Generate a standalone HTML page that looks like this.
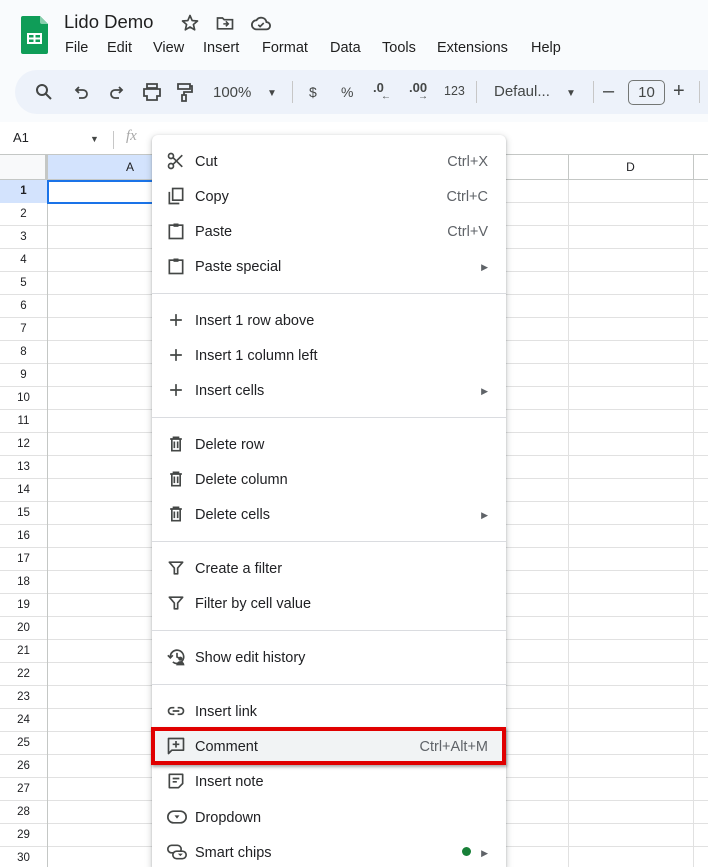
<!DOCTYPE html>
<html style="overflow:hidden;height:867px"><head><meta charset="utf-8"><style>
*{margin:0;padding:0;box-sizing:border-box}
body{width:708px;height:867px;overflow:hidden;position:relative;background:#fff;font-family:"Liberation Sans",Arial,sans-serif;color:#202124}
.a{position:absolute}
.top{left:0;top:0;width:708px;height:122px;background:#f9fbfd}
.title{left:64px;top:11px;font-size:18.5px;color:#1f1f1f}
.mb{top:40px;font-size:14.5px;color:#1f1f1f}
.tb{left:15px;top:70px;width:720px;height:44px;border-radius:22px;background:#edf2fa}
.ti{font-size:14px;color:#444746}
.sep{width:1px;height:22px;background:#c7c7c7;top:81px}
.grid{left:0;top:180px;width:708px;height:687px;
background-image:repeating-linear-gradient(to bottom,transparent 0,transparent 22px,#e1e1e1 22px,#e1e1e1 23px);}
.rn{left:0;width:47px;text-align:center;font-size:11.5px;color:#202124;height:23px;line-height:23px}
.menu{left:152px;top:135px;width:354px;height:732px;background:#fff;border-radius:6px 6px 0 0;box-shadow:0 2px 6px 2px rgba(60,64,67,.15),0 1px 2px rgba(60,64,67,.3)}
.it{position:absolute;left:0;width:354px;height:35px;line-height:39px;font-size:14.5px;color:#202124}
.it .t{position:absolute;left:43px}
.it .k{position:absolute;right:18px;color:#5f6368;font-size:14.5px}
.it .ar{position:absolute;right:18px;top:0;font-size:9px;color:#5f6368}
.it svg{position:absolute;left:14px;top:8px}
.ms{position:absolute;left:0;width:354px;height:1px;background:#dadce0}
</style></head><body>
<div class="a top"></div>
<svg class="a" style="left:21px;top:16px" width="27" height="38" viewBox="0 0 27 38"><path d="M2 0h17l8 8v28a2 2 0 0 1-2 2H2a2 2 0 0 1-2-2V2a2 2 0 0 1 2-2z" fill="#0f9d58"/><path d="M19 0l8 8h-6a2 2 0 0 1-2-2z" fill="#87ceac"/><rect x="6" y="17" width="15" height="11" fill="#fff"/><rect x="8" y="19" width="4.5" height="2.5" fill="#0f9d58"/><rect x="14.5" y="19" width="4.5" height="2.5" fill="#0f9d58"/><rect x="8" y="23.5" width="4.5" height="2.5" fill="#0f9d58"/><rect x="14.5" y="23.5" width="4.5" height="2.5" fill="#0f9d58"/></svg>
<div class="a title">Lido Demo</div>
<svg class="a" style="left:180px;top:13px" width="20" height="20" viewBox="0 0 24 24"><path d="M12 3l2.6 6.1 6.4.5-4.9 4.2 1.5 6.4L12 16.8 6.4 20.2l1.5-6.4L3 9.6l6.4-.5z" fill="none" stroke="#444746" stroke-width="2" stroke-linejoin="round"/></svg>
<svg class="a" style="left:215px;top:13px" width="20" height="20" viewBox="0 0 24 24"><path d="M3 6h6l2 2h10v11H3z" fill="none" stroke="#444746" stroke-width="2"/><path d="M10 13h6M13 10l3 3-3 3" fill="none" stroke="#444746" stroke-width="1.8"/></svg>
<svg class="a" style="left:250px;top:13px" width="22" height="20" viewBox="0 0 24 22"><path d="M7 18a5 5 0 0 1 0-10 6 6 0 0 1 11 2 4 4 0 0 1 0 8z" fill="none" stroke="#444746" stroke-width="2"/><path d="M9 13l2 2 4-4" fill="none" stroke="#444746" stroke-width="1.8"/></svg>
<div class="a mb" style="left:65px">File</div><div class="a mb" style="left:107px">Edit</div><div class="a mb" style="left:153px">View</div><div class="a mb" style="left:203px">Insert</div><div class="a mb" style="left:262px">Format</div><div class="a mb" style="left:330px">Data</div><div class="a mb" style="left:382px">Tools</div><div class="a mb" style="left:437px">Extensions</div><div class="a mb" style="left:531px">Help</div>
<div class="a tb"></div>
<svg class="a" style="left:35px;top:83px" width="18" height="18" viewBox="0 0 18 18"><circle cx="7" cy="7" r="5" fill="none" stroke="#444746" stroke-width="2"/><path d="M11 11l5 5" stroke="#444746" stroke-width="2"/></svg>
<svg class="a" style="left:74px;top:85px" width="16" height="16" viewBox="0 0 16 16"><path d="M5 2L2 5l3 3M2 5h7a4 4 0 0 1 0 8H5" fill="none" stroke="#444746" stroke-width="1.8"/></svg>
<svg class="a" style="left:108px;top:85px" width="16" height="16" viewBox="0 0 16 16"><path d="M11 2l3 3-3 3M14 5H7a4 4 0 0 0 0 8h4" fill="none" stroke="#444746" stroke-width="1.8"/></svg>
<svg class="a" style="left:142px;top:83px" width="20" height="18" viewBox="0 0 20 18"><path d="M5 1h10v4H5zM2 6h16v7h-3v4H5v-4H2z" fill="none" stroke="#444746" stroke-width="1.8"/></svg>
<svg class="a" style="left:176px;top:82px" width="18" height="20" viewBox="0 0 18 20"><path d="M2 2h12v5H2zM14 4h2v6H8v3M6 13h4v6H6z" fill="none" stroke="#444746" stroke-width="1.8"/></svg>
<div class="a ti" style="left:213px;top:84px;font-size:15px">100%</div>
<div class="a ti" style="left:267px;top:88px;font-size:10px">▼</div>
<div class="a sep" style="left:292px"></div>
<div class="a ti" style="left:309px;top:84px">$</div>
<div class="a ti" style="left:341px;top:84px">%</div>
<div class="a ti" style="left:373px;top:80px;font-weight:bold;font-size:13px">.0</div><div class="a ti" style="left:381px;top:91px;font-size:10px">←</div>
<div class="a ti" style="left:409px;top:80px;font-weight:bold;font-size:13px">.00</div><div class="a ti" style="left:418px;top:91px;font-size:10px">→</div>
<div class="a ti" style="left:444px;top:84px;font-size:12.5px">123</div>
<div class="a sep" style="left:476px"></div>
<div class="a ti" style="left:494px;top:83px;font-size:15px">Defaul...</div>
<div class="a ti" style="left:566px;top:88px;font-size:10px">▼</div>
<div class="a sep" style="left:593px"></div>
<div class="a ti" style="left:603px;top:80px;font-size:20px">–</div>
<div class="a" style="left:628px;top:80px;width:37px;height:25px;border:1px solid #747775;border-radius:5px;font-size:15px;text-align:center;line-height:23px;color:#444746">10</div>
<div class="a ti" style="left:673px;top:80px;font-size:20px">+</div>
<div class="a sep" style="left:699px"></div>
<div class="a" style="left:13px;top:130px;font-size:13px;color:#202124">A1</div>
<div class="a" style="left:90px;top:134px;font-size:9px;color:#444746">▼</div>
<div class="a" style="left:113px;top:131px;width:1px;height:18px;background:#c7c7c7"></div>
<div class="a" style="left:126px;top:128px;font-size:15px;color:#a8a8a8;font-style:italic;font-family:'Liberation Serif',serif">fx</div>
<div class="a" style="left:0;top:154px;width:708px;height:1px;background:#c4c7c5"></div>
<div class="a" style="left:0;top:155px;width:45px;height:25px;background:#f8f9fa"></div>
<div class="a" style="left:45px;top:155px;width:3px;height:25px;background:#c4c7c5"></div>
<div class="a" style="left:48px;top:155px;width:164px;height:25px;background:#d3e3fd;text-align:center;font-size:12px;line-height:25px">A</div>
<div class="a" style="left:568px;top:155px;width:125px;height:25px;text-align:center;font-size:12px;line-height:25px;color:#202124">D</div>
<div class="a" style="left:0;top:179px;width:708px;height:1px;background:#c4c7c5"></div>
<div class="a grid"></div>
<div class="a" style="left:47px;top:155px;width:1px;height:712px;background:#c4c7c5"></div>
<div class="a" style="left:212px;top:155px;width:1px;height:712px;background:#e1e1e1"></div>
<div class="a" style="left:568px;top:155px;width:1px;height:25px;background:#c4c7c5"></div>
<div class="a" style="left:568px;top:180px;width:1px;height:687px;background:#e1e1e1"></div>
<div class="a" style="left:693px;top:155px;width:1px;height:25px;background:#c4c7c5"></div>
<div class="a" style="left:693px;top:180px;width:1px;height:687px;background:#e1e1e1"></div>
<div class="a" style="left:0;top:180px;width:47px;height:23px;background:#d3e3fd"></div>
<div class="a" style="left:47px;top:180px;width:166px;height:24px;border:2px solid #1a73e8"></div>
<div id="rows"></div>
<script>
var h='';for(var i=1;i<=30;i++){h+='<div class="a rn" style="top:'+(180+(i-1)*23)+'px'+(i==1?';font-weight:bold':'')+'">'+i+'</div>';}
document.getElementById('rows').innerHTML=h;
</script>
<div class="a menu">
<div class="it" style="top:8px"><svg width="20" height="20" viewBox="0 0 24 24"><circle cx="6" cy="6" r="3" fill="none" stroke="#444746" stroke-width="2"/><circle cx="6" cy="18" r="3" fill="none" stroke="#444746" stroke-width="2"/><path d="M8.5 8l11 11M8.5 16l11-11" stroke="#444746" stroke-width="2"/></svg><span class="t">Cut</span><span class="k">Ctrl+X</span></div>
<div class="it" style="top:43px"><svg width="20" height="20" viewBox="0 0 24 24"><path d="M4 7v14h12" fill="none" stroke="#444746" stroke-width="2"/><rect x="8" y="3" width="12" height="14" fill="none" stroke="#444746" stroke-width="2"/></svg><span class="t">Copy</span><span class="k">Ctrl+C</span></div>
<div class="it" style="top:78px"><svg width="20" height="20" viewBox="0 0 24 24"><rect x="4" y="5" width="16" height="16" fill="none" stroke="#444746" stroke-width="2"/><rect x="9" y="3" width="6" height="4" fill="#444746"/></svg><span class="t">Paste</span><span class="k">Ctrl+V</span></div>
<div class="it" style="top:113px"><svg width="20" height="20" viewBox="0 0 24 24"><rect x="4" y="5" width="16" height="16" fill="none" stroke="#444746" stroke-width="2"/><rect x="9" y="3" width="6" height="4" fill="#444746"/></svg><span class="t">Paste special</span><span class="ar">▶</span></div>
<div class="ms" style="top:158px"></div>
<div class="it" style="top:167px"><svg width="20" height="20" viewBox="0 0 24 24"><path d="M12 5v14M5 12h14" stroke="#444746" stroke-width="2"/></svg><span class="t">Insert 1 row above</span></div>
<div class="it" style="top:202px"><svg width="20" height="20" viewBox="0 0 24 24"><path d="M12 5v14M5 12h14" stroke="#444746" stroke-width="2"/></svg><span class="t">Insert 1 column left</span></div>
<div class="it" style="top:237px"><svg width="20" height="20" viewBox="0 0 24 24"><path d="M12 5v14M5 12h14" stroke="#444746" stroke-width="2"/></svg><span class="t">Insert cells</span><span class="ar">▶</span></div>
<div class="ms" style="top:282px"></div>
<div class="it" style="top:291px"><svg width="20" height="20" viewBox="0 0 24 24"><path d="M5 6h14M9 6V4h6v2M7 6v14h10V6M10 9v8M14 9v8" fill="none" stroke="#444746" stroke-width="2"/></svg><span class="t">Delete row</span></div>
<div class="it" style="top:326px"><svg width="20" height="20" viewBox="0 0 24 24"><path d="M5 6h14M9 6V4h6v2M7 6v14h10V6M10 9v8M14 9v8" fill="none" stroke="#444746" stroke-width="2"/></svg><span class="t">Delete column</span></div>
<div class="it" style="top:361px"><svg width="20" height="20" viewBox="0 0 24 24"><path d="M5 6h14M9 6V4h6v2M7 6v14h10V6M10 9v8M14 9v8" fill="none" stroke="#444746" stroke-width="2"/></svg><span class="t">Delete cells</span><span class="ar">▶</span></div>
<div class="ms" style="top:406px"></div>
<div class="it" style="top:415px"><svg width="20" height="20" viewBox="0 0 24 24"><path d="M4 5h16l-6 7v7h-4v-7z" fill="none" stroke="#444746" stroke-width="2" stroke-linejoin="round"/></svg><span class="t">Create a filter</span></div>
<div class="it" style="top:450px"><svg width="20" height="20" viewBox="0 0 24 24"><path d="M4 5h16l-6 7v7h-4v-7z" fill="none" stroke="#444746" stroke-width="2" stroke-linejoin="round"/></svg><span class="t">Filter by cell value</span></div>
<div class="ms" style="top:495px"></div>
<div class="it" style="top:504px"><svg width="22" height="20" viewBox="0 0 24 24"><path d="M4 12a8 8 0 1 1 3 6" fill="none" stroke="#444746" stroke-width="2"/><path d="M1 10l3 3 3-3" fill="none" stroke="#444746" stroke-width="2"/><circle cx="16" cy="14" r="2.5" fill="#444746"/><path d="M11 22a5 5 0 0 1 10 0z" fill="#444746"/><path d="M12 7v5l2 1" fill="none" stroke="#444746" stroke-width="2"/></svg><span class="t">Show edit history</span></div>
<div class="ms" style="top:549px"></div>
<div class="it" style="top:558px"><svg width="20" height="20" viewBox="0 0 24 24"><path d="M10 8H7a4 4 0 0 0 0 8h3M14 8h3a4 4 0 0 1 0 8h-3M8 12h8" fill="none" stroke="#444746" stroke-width="2"/></svg><span class="t">Insert link</span></div>
<div class="it" style="top:593px;background:#f1f3f4"><svg width="20" height="20" viewBox="0 0 24 24"><path d="M3 3h18v14H7l-4 4z" fill="none" stroke="#444746" stroke-width="2" stroke-linejoin="round"/><path d="M12 6v8M8 10h8" stroke="#444746" stroke-width="2"/></svg><span class="t">Comment</span><span class="k">Ctrl+Alt+M</span></div>
<div class="it" style="top:628px"><svg width="20" height="20" viewBox="0 0 24 24"><path d="M4 4h16v11l-5 5H4z" fill="none" stroke="#444746" stroke-width="2" stroke-linejoin="round"/><path d="M8 9h8M8 13h5" stroke="#444746" stroke-width="2"/></svg><span class="t">Insert note</span></div>
<div class="it" style="top:664px"><svg width="22" height="20" viewBox="0 0 24 24"><rect x="1" y="5" width="22" height="14" rx="7" fill="none" stroke="#444746" stroke-width="2"/><path d="M9 10h6l-3 4z" fill="#444746"/></svg><span class="t">Dropdown</span></div>
<div class="it" style="top:699px"><svg width="22" height="20" viewBox="0 0 24 24"><rect x="1" y="4" width="16" height="9" rx="4.5" fill="none" stroke="#444746" stroke-width="2"/><rect x="7" y="11" width="16" height="9" rx="4.5" fill="#fff" stroke="#444746" stroke-width="2"/><path d="M13 14h6l-3 3z" fill="#444746"/></svg><span class="t">Smart chips</span><span style="position:absolute;right:35px;top:13px;width:9px;height:9px;border-radius:50%;background:#188038"></span><span class="ar">▶</span></div>
</div>
<div class="a" style="left:151px;top:727px;width:355px;height:38px;border:4px solid #e00000;box-shadow:1px 2px 3px rgba(0,0,0,.35)"></div>
</body></html>
